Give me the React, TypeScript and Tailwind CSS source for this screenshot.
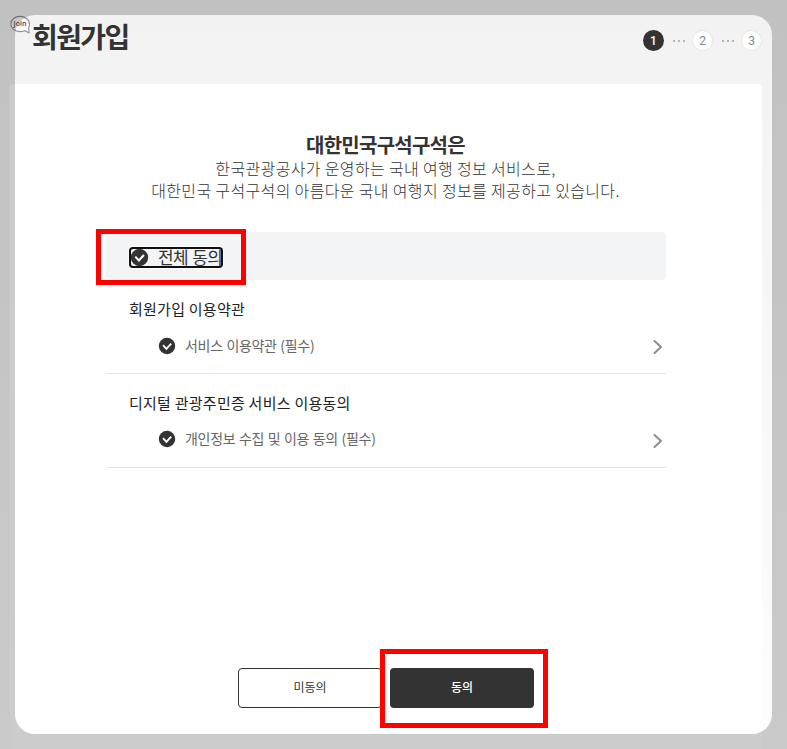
import * as React from "react";
import { clsx } from "clsx";

interface TermItem {
  title: string;
  label: string;
}

const TERMS: TermItem[] = [
  { title: "회원가입 이용약관", label: "서비스 이용약관 (필수)" },
  { title: "디지털 관광주민증 서비스 이용동의", label: "개인정보 수집 및 이용 동의 (필수)" },
];

function CheckIcon({ className }: { className?: string }) {
  return (
    <svg viewBox="0 0 18 18" className={clsx("shrink-0", className)} fill="none">
      <circle cx="9" cy="9" r="8.2" fill="#333" />
      <path d="M5 8.2 8.4 11.8 13.2 6.6" stroke="#fff" strokeWidth="1.9" />
    </svg>
  );
}

function ChevronIcon() {
  return (
    <svg viewBox="0 0 10 16" className="h-4 w-2.5 shrink-0" fill="none">
      <path
        d="M1.5 2 8 8l-6.5 6"
        stroke="#8c8c8c"
        strokeWidth="2"
        strokeLinecap="round"
        strokeLinejoin="round"
      />
    </svg>
  );
}

function JoinIcon() {
  return (
    <svg viewBox="0 0 20 20" className="h-5 w-5 shrink-0">
      <path
        d="M9.8 1.4C5 1.4.9 4.4.9 8.9c0 4.5 4 7.7 8.9 7.7 2 0 3.7-.3 5-.9l4.3 2.2-.4-5.4c.5-1.1.8-2.4.8-3.6C19.5 4.4 15 1.4 9.8 1.4Z"
        fill="#fafafa"
        stroke="#8f8f8f"
        strokeWidth="1.1"
      />
      <text
        x="10"
        y="11.4"
        textAnchor="middle"
        fontSize="7"
        fontWeight="600"
        fontFamily="Open Sans, sans-serif"
        fill="#4a4a4a"
      >
        Join
      </text>
    </svg>
  );
}

function StepDots() {
  return (
    <div className="flex w-[28px] justify-center gap-[3px] pl-px">
      <i className="h-[2px] w-[2px] bg-[#b5b5b5]" />
      <i className="h-[2px] w-[2px] bg-[#b5b5b5]" />
      <i className="h-[2px] w-[2px] bg-[#b5b5b5]" />
    </div>
  );
}

function Step({ value, active = false }: { value: number; active?: boolean }) {
  return (
    <span
      className={clsx(
        "flex h-[21px] w-[21px] items-center justify-center rounded-full text-[12px] leading-none",
        active ? "bg-[#333] font-medium text-white" : "border border-[#e6e6e6] bg-white text-[#888]"
      )}
    >
      {value}
    </span>
  );
}

function TermRow({ title, label, compact }: TermItem & { compact: boolean }) {
  return (
    <li className="h-[94px] border-b border-[#e5e5e5] pt-[17px]">
      <h3 className="pl-[23px] text-[15px] leading-6 font-normal tracking-[0.25px] text-[#222]">
        {title}
      </h3>
      <div className="mt-[13px] flex h-6 items-center justify-between pr-[3px] pl-[52px]">
        <div className={clsx("flex items-center", compact && "pb-[2px]")}>
          <CheckIcon className="h-[18px] w-[18px]" />
          <span className="ml-[9px] pb-[2px] text-[14px] leading-5 tracking-[-0.3px] text-[#666] [word-spacing:0.8px]">
            {label}
          </span>
        </div>
        <div className="pt-[2px]">
          <ChevronIcon />
        </div>
      </div>
    </li>
  );
}

export default function App() {
  return (
    <div className="relative h-[749px] w-[787px] overflow-hidden bg-linear-to-b from-[#f2f2f2] to-[#fdfdfd] font-['Noto_Sans_CJK_KR','Noto_Sans',sans-serif] text-[#333]">
      <header className="flex h-[84px] items-start justify-between pr-[25px] pl-[10px]">
        <div className="flex items-start gap-[2px] pt-[15px]">
          <JoinIcon />
          <h1 className="text-[28px] leading-[42px] font-bold tracking-[-1.6px]">회원가입</h1>
        </div>
        <div className="flex items-center pt-[30px] font-['Roboto',sans-serif]">
          <Step value={1} active />
          <StepDots />
          <Step value={2} />
          <StepDots />
          <Step value={3} />
        </div>
      </header>

      <main className="ml-[10px] flex h-[665px] w-[752px] flex-col rounded-t-[4px] bg-white pt-[48px]">
        <div className="pr-px text-center">
          <h2 className="text-[20px] leading-[25px] font-bold tracking-[-0.75px]">
            대한민국구석구석은
          </h2>
          <p className="text-[16px] leading-[22px] font-light tracking-[0.35px]">
            한국관광공사가 운영하는 국내 여행 정보 서비스로,
            <br />
            대한민국 구석구석의 아름다운 국내 여행지 정보를 제공하고 있습니다.
          </p>
        </div>

        <section className="mt-[31px] ml-24 w-[560px]">
          <div className="relative flex h-12 items-center rounded-[4px] bg-[#f3f4f6] pt-[2px] pl-[23px]">
            <label className="flex h-[21px] w-[94px] items-center rounded-[4px] border-2 border-[#101010] ring-1 ring-white">
              <CheckIcon className="-ml-px h-[19px] w-[19px]" />
              <span className="ml-[9px] pb-[2px] text-[17px] leading-none tracking-[-0.6px] whitespace-nowrap [word-spacing:1px]">
                전체 동의
              </span>
            </label>
            <span className="absolute -top-[3px] -left-[10px] h-[56px] w-[150px] border-[5px] border-[#f00]" />
          </div>
          <ul>
            {TERMS.map((term, i) => (
              <TermRow key={term.title} {...term} compact={i > 0} />
            ))}
          </ul>
        </section>

        <div className="mt-[200px] ml-[228px] flex gap-2 text-[12px]">
          <button className="h-10 w-36 rounded-[4px] border border-[#333] bg-white pb-[2px]">
            미동의
          </button>
          <div className="relative">
            <button className="h-10 w-36 rounded-[4px] bg-[#333] pb-[2px] font-medium text-white">
              동의
            </button>
            <span className="absolute -top-[19px] -left-[10px] h-[79px] w-[168px] border-[5px] border-[#f00]" />
          </div>
        </div>
      </main>

      {/* Spotlight: dims everything outside the rounded area */}
      <div className="pointer-events-none absolute top-[15px] left-[15px] h-[719px] w-[757px] rounded-[20px] shadow-[0_0_0_100px_rgba(0,0,0,0.2)]" />
    </div>
  );
}
